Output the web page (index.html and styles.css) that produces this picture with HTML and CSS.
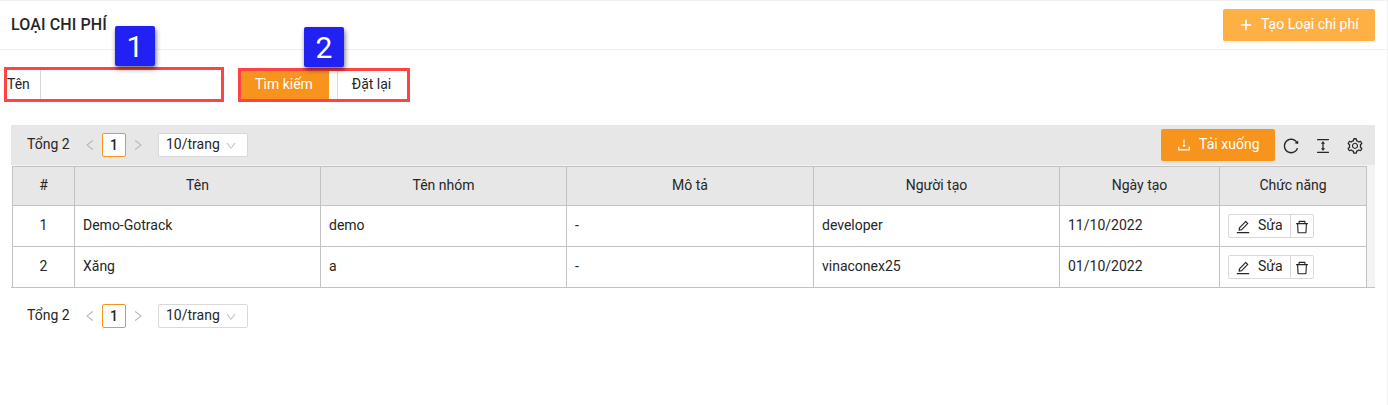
FILE: index.html
```html
<!DOCTYPE html>
<html lang="vi">
<head>
<meta charset="utf-8">
<title>Loại chi phí</title>
<link rel="stylesheet" href="styles.css">
</head>
<body>
<svg class="sprite" aria-hidden="true">
  <symbol id="plus" viewBox="0 0 1024 1024"><path d="M460 176h104v672h-104z"/><path d="M176 460h672v104H176z"/></symbol>
  <symbol id="left" viewBox="0 0 1024 1024"><path d="M724 218.3V141c0-6.7-7.7-10.4-12.9-6.3L260.3 486.8a31.86 31.86 0 000 50.3l450.8 352.1c5.3 4.1 12.9.4 12.9-6.3v-77.3c0-4.9-2.3-9.6-6.1-12.6l-360-281 360-281.1c3.8-3 6.1-7.7 6.1-12.6z"/></symbol>
  <symbol id="right" viewBox="0 0 1024 1024"><path d="M765.7 486.8L314.9 134.7A7.97 7.97 0 00302 141v77.3c0 4.9 2.3 9.6 6.1 12.6l360 281.1-360 281.1c-3.9 3-6.1 7.7-6.1 12.6V883c0 6.7 7.7 10.4 12.9 6.3l450.8-352.1a31.96 31.96 0 000-50.4z"/></symbol>
  <symbol id="down" viewBox="0 0 1024 1024"><path d="M884 256h-75c-5.1 0-9.9 2.5-12.9 6.6L512 654.2 227.9 262.6c-3-4.1-7.8-6.6-12.9-6.6h-75c-6.5 0-10.3 7.4-6.5 12.7l352.6 486.1c12.8 17.6 39 17.6 51.7 0l352.6-486.1c3.9-5.3.1-12.7-6.4-12.7z"/></symbol>
  <symbol id="reload" viewBox="0 0 1024 1024"><path d="M909.1 209.3l-56.4 44.1C775.8 155.1 656.2 92 521.9 92 290 92 102.3 279.5 102 511.5 101.7 743.7 289.8 932 521.9 932c181.3 0 335.8-115 394.6-276.1 1.5-4.2-.7-8.9-4.9-10.3l-56.7-19.5a8 8 0 00-10.1 4.8c-1.8 5-3.8 10-5.9 14.9-17.3 41-42.1 77.8-73.7 109.4A344.77 344.77 0 01655.9 829c-42.3 17.9-87.4 27-133.8 27-46.5 0-91.5-9.1-133.8-27A341.5 341.5 0 01279 755.2a342.16 342.16 0 01-73.7-109.4c-17.9-42.4-27-87.4-27-133.9s9.1-91.5 27-133.9c17.3-41 42.1-77.8 73.7-109.4 31.6-31.6 68.4-56.4 109.3-73.8 42.3-17.9 87.4-27 133.8-27 46.5 0 91.5 9.1 133.8 27a341.5 341.5 0 01109.3 73.8c9.9 9.9 19.2 20.4 27.8 31.4l-60.2 47a8 8 0 003 14.1l175.6 43c5 1.2 9.9-2.6 9.9-7.7l.8-180.9c-.1-6.6-7.8-10.3-13-6.2z"/></symbol>
  <symbol id="height" viewBox="0 0 1024 1024"><path d="M840 836H184c-4.4 0-8 3.6-8 8v60c0 4.4 3.6 8 8 8h656c4.4 0 8-3.6 8-8v-60c0-4.4-3.6-8-8-8zm0-724H184c-4.4 0-8 3.6-8 8v60c0 4.4 3.6 8 8 8h656c4.4 0 8-3.6 8-8v-60c0-4.4-3.6-8-8-8zM610.8 378c6 0 9.4-7 5.7-11.7L515.7 238.7a7.14 7.14 0 00-11.3 0L403.6 366.3a7.23 7.23 0 005.7 11.7H476v268h-62.8c-6 0-9.4 7-5.7 11.7l100.8 127.5c2.9 3.7 8.5 3.7 11.3 0l100.8-127.5c3.7-4.7.4-11.7-5.7-11.7H548V378h62.8z"/></symbol>
  <symbol id="setting" viewBox="0 0 1024 1024"><path d="M924.8 625.7l-65.5-56c3.1-19 4.7-38.4 4.7-57.8s-1.6-38.8-4.7-57.8l65.5-56a32.03 32.03 0 009.3-35.2l-.9-2.6a443.74 443.74 0 00-79.7-137.9l-1.8-2.1a32.12 32.12 0 00-35.1-9.5l-81.3 28.9c-30-24.6-63.5-44-99.7-57.6l-15.7-85a32.05 32.05 0 00-25.8-25.7l-2.7-.5c-52.1-9.4-106.9-9.4-159 0l-2.7.5a32.05 32.05 0 00-25.8 25.7l-15.8 85.4a351.86 351.86 0 00-99 57.4l-81.9-29.1a32 32 0 00-35.1 9.5l-1.8 2.1a446.02 446.02 0 00-79.7 137.9l-.9 2.6c-4.5 12.5-.8 26.5 9.3 35.2l66.3 56.6c-3.1 18.8-4.6 38-4.6 57.1 0 19.2 1.5 38.4 4.6 57.1L99 625.5a32.03 32.03 0 00-9.3 35.2l.9 2.6c18.1 50.4 44.9 96.9 79.7 137.9l1.8 2.1a32.12 32.12 0 0035.1 9.5l81.9-29.1c29.8 24.5 63.1 43.9 99 57.4l15.8 85.4a32.05 32.05 0 0025.8 25.7l2.7.5a449.4 449.4 0 00159 0l2.7-.5a32.05 32.05 0 0025.8-25.7l15.7-85a350 350 0 0099.7-57.6l81.3 28.9a32 32 0 0035.1-9.5l1.8-2.1c34.8-41.1 61.6-87.5 79.7-137.9l.9-2.6c4.5-12.3.8-26.3-9.3-35zM788.3 465.9c2.5 15.1 3.8 30.6 3.8 46.1s-1.3 31-3.8 46.1l-6.6 40.1 74.7 63.9a370.03 370.03 0 01-42.6 73.6L721 702.8l-31.4 25.8c-23.9 19.6-50.5 35-79.3 45.8l-38.1 14.3-17.9 97a377.5 377.5 0 01-85 0l-17.9-97.2-37.8-14.5c-28.5-10.8-55-26.2-78.7-45.7l-31.4-25.9-93.4 33.2c-17-22.9-31.2-47.6-42.6-73.6l75.5-64.5-6.5-40c-2.4-14.9-3.7-30.3-3.7-45.5 0-15.3 1.2-30.6 3.7-45.5l6.5-40-75.5-64.5c11.3-26.1 25.6-50.7 42.6-73.6l93.4 33.2 31.4-25.9c23.7-19.5 50.2-34.9 78.7-45.7l37.9-14.3 17.9-97.2c28.1-3.2 56.8-3.2 85 0l17.9 97 38.1 14.3c28.7 10.8 55.4 26.2 79.3 45.8l31.4 25.8 92.8-32.9c17 22.9 31.2 47.6 42.6 73.6L781.8 426l6.5 39.9zM512 326c-97.2 0-176 78.8-176 176s78.8 176 176 176 176-78.8 176-176-78.8-176-176-176zm79.2 255.2A111.6 111.6 0 01512 614c-29.9 0-58-11.7-79.2-32.8A111.6 111.6 0 01400 502c0-29.9 11.7-58 32.8-79.2C454 401.6 482.1 390 512 390c29.9 0 58 11.6 79.2 32.8A111.6 111.6 0 01624 502c0 29.9-11.7 58-32.8 79.2z"/></symbol>
  <symbol id="download" viewBox="0 0 1024 1024"><path d="M505.7 661a8 8 0 0012.6 0l112-141.7c4.1-5.2.4-12.9-6.3-12.9h-74.1V168c0-4.4-3.6-8-8-8h-60c-4.4 0-8 3.6-8 8v338.3H400c-6.7 0-10.4 7.7-6.3 12.9l112 141.8zM878 626h-60c-4.4 0-8 3.6-8 8v154H214V634c0-4.4-3.6-8-8-8h-60c-4.4 0-8 3.6-8 8v198c0 17.7 14.3 32 32 32h684c17.7 0 32-14.3 32-32V634c0-4.4-3.6-8-8-8z"/></symbol>
  <symbol id="edit" viewBox="0 0 1024 1024"><path d="M257.7 752c2 0 4-.2 6-.5L431.9 722c2-.4 3.9-1.3 5.3-2.8l423.9-423.9a9.96 9.96 0 000-14.1L694.9 114.9c-1.9-1.9-4.4-2.9-7.1-2.9s-5.2 1-7.1 2.9L256.8 538.8c-1.5 1.5-2.4 3.3-2.8 5.3l-29.5 168.2a33.5 33.5 0 009.4 29.8c6.6 6.4 14.9 9.9 23.8 9.9zm67.4-174.4L687.8 215l73.3 73.3-362.7 362.6-88.9 15.7 15.6-89zM880 836H144c-17.7 0-32 14.3-32 32v36c0 4.4 3.6 8 8 8h784c4.4 0 8-3.6 8-8v-36c0-17.7-14.3-32-32-32z"/></symbol>
  <symbol id="delete" viewBox="0 0 1024 1024"><path d="M360 184h-8c4.4 0 8-3.6 8-8v8h304v-8c0 4.4 3.6 8 8 8h-8v72h72v-80c0-35.3-28.7-64-64-64H352c-35.3 0-64 28.7-64 64v80h72v-72zm504 72H160c-17.7 0-32 14.3-32 32v32c0 4.4 3.6 8 8 8h60.4l24.7 523c1.6 34.1 29.8 61 63.9 61h454c34.2 0 62.3-26.8 63.9-61l24.7-523H888c4.4 0 8-3.6 8-8v-32c0-17.7-14.3-32-32-32zM731.3 840H292.7l-24.2-512h487l-24.2 512z"/></symbol>
</svg>
<main class="page">
  <header class="header">
    <h1 class="title">LOẠI CHI PHÍ</h1>
    <button class="btn btn-create"><svg class="icon"><use href="#plus"/></svg><span>Tạo Loại chi phí</span></button>
  </header>

  <form class="filters">
    <div class="callout callout-name">
      <label class="name-label" for="name">Tên</label>
      <input class="name-input" id="name" type="text">
      <span class="step step-one">1</span>
    </div>
    <div class="callout callout-actions">
      <button class="search" type="button">Tìm kiếm</button>
      <button class="reset" type="button">Đặt lại</button>
      <span class="step step-two">2</span>
    </div>
  </form>

  <section class="list">
    <div class="toolbar">
      <div class="pager">
        <span class="total">Tổng 2</span>
        <svg class="arrow"><use href="#left"/></svg>
        <span class="current">1</span>
        <svg class="arrow"><use href="#right"/></svg>
        <span class="size"><span>10/trang</span><svg class="caret"><use href="#down"/></svg></span>
      </div>
      <div class="tools">
        <button class="btn btn-download"><svg class="icon"><use href="#download"/></svg><span>Tải xuống</span></button>
        <svg class="tool"><use href="#reload"/></svg>
        <svg class="tool"><use href="#height"/></svg>
        <svg class="tool"><use href="#setting"/></svg>
      </div>
    </div>
    <div class="table-wrap">
      <table class="table">
        <colgroup><col class="c-index"><col class="c-name"><col class="c-group"><col class="c-desc"><col class="c-user"><col class="c-date"><col class="c-action"></colgroup>
        <thead>
          <tr><th>#</th><th>Tên</th><th>Tên nhóm</th><th>Mô tả</th><th>Người tạo</th><th>Ngày tạo</th><th>Chức năng</th></tr>
        </thead>
        <tbody>
          <tr><td class="num">1</td><td>Demo-Gotrack</td><td>demo</td><td>-</td><td>developer</td><td>11/10/2022</td>
            <td><div class="actions"><span class="edit"><svg class="icon"><use href="#edit"/></svg><span>Sửa</span></span><span class="delete"><svg class="icon"><use href="#delete"/></svg></span></div></td></tr>
          <tr><td class="num">2</td><td>Xăng</td><td>a</td><td>-</td><td>vinaconex25</td><td>01/10/2022</td>
            <td><div class="actions"><span class="edit"><svg class="icon"><use href="#edit"/></svg><span>Sửa</span></span><span class="delete"><svg class="icon"><use href="#delete"/></svg></span></div></td></tr>
        </tbody>
      </table>
    </div>
    <div class="pager pager-bottom">
      <span class="total">Tổng 2</span>
      <svg class="arrow"><use href="#left"/></svg>
      <span class="current">1</span>
      <svg class="arrow"><use href="#right"/></svg>
      <span class="size"><span>10/trang</span><svg class="caret"><use href="#down"/></svg></span>
    </div>
  </section>
</main>
</body>
</html>
```

FILE: styles.css
```css
* { box-sizing: border-box; }
body {
  margin: 0;
  background: #fff;
  color: #262626;
  font: 14px/22px Roboto, "Liberation Sans", sans-serif;
}
svg { display: block; fill: currentColor; flex: none; }
button, input { font: inherit; letter-spacing: inherit; color: inherit; margin: 0; border: 0; }
.sprite { position: absolute; width: 0; height: 0; }
.icon { width: 16px; height: 16px; }

.page {
  height: 405px;
  border-top: 1px solid #f0f0f0;
  border-right: 1px solid #f0f0f0;
}
.header {
  display: flex;
  justify-content: space-between;
  align-items: center;
  height: 49px;
  padding: 0 12px 0 11px;
  border-bottom: 1px solid #f0f0f0;
}
.title { margin: 0; font-size: 16px; font-weight: 500; letter-spacing: 0.12px; }
.btn {
  display: flex;
  align-items: center;
  height: 32px;
  padding: 0 0 0 15px;
  gap: 7px;
  border-radius: 2px;
  background: #f7941d;
  color: #fff;
  white-space: nowrap;
  box-shadow: 0 2px 0 rgba(0, 0, 0, 0.04);
}
.btn span { margin-top: -2px; }
.btn-create { width: 152px; background: #ffb044; }

.filters { display: flex; gap: 14px; height: 75px; padding: 17px 0 0 4px; }
.callout { position: relative; display: flex; border: 3px solid #ff4242; }
.callout-name { width: 220px; height: 35px; }
.callout-actions { width: 172px; height: 34px; margin-top: 1px; }
.name-label { width: 33px; line-height: 28px; }
.name-input { flex: 1; min-width: 0; border-left: 1px solid #d9d9d9; background: #fff; }
.search { width: 88px; padding: 0 2px 2px 0; background: #f7941d; color: #fff; }
.reset { flex: 1; margin-left: 8px; padding: 0 2px 2px 0; border-left: 1px solid #d9d9d9; background: #fff; }
.step {
  position: absolute;
  width: 40px;
  height: 40px;
  border-radius: 2px;
  background: #2121f3;
  color: #fff;
  font: 30px/41px Roboto, "Liberation Sans", sans-serif;
  text-align: center;
  box-shadow: 1px 3px 5px rgba(0, 0, 0, 0.55);
}
.step-one { left: 108px; top: -44px; }
.step-two { left: 63px; top: -44px; }

.list { padding: 0 12px 0 11px; }
.toolbar {
  display: flex;
  justify-content: space-between;
  align-items: center;
  height: 40px;
  padding: 0 11px 0 16px;
  background: #e7e7e7;
}
.pager { display: flex; align-items: center; height: 24px; }
.total { width: 56px; margin-top: -2px; }
.arrow { width: 14px; height: 14px; color: #b8b8b8; }
.current {
  width: 24px;
  height: 24px;
  margin: 0 5px;
  border: 1px solid #f7941d;
  border-radius: 2px;
  background: #fff;
  font-weight: 500;
  text-align: center;
}
.size {
  display: flex;
  align-items: center;
  justify-content: space-between;
  width: 90px;
  height: 24px;
  margin-left: 13px;
  padding: 0 10px 0 7px;
  border: 1px solid #d9d9d9;
  border-radius: 2px;
  background: #fff;
}
.size span { margin-top: -2px; }
.caret { width: 12px; height: 12px; color: #bfbfbf; margin-top: 2px; }
.tools { display: flex; align-items: center; gap: 14px; }
.btn-download { width: 114px; margin-right: -7px; letter-spacing: 0.05px; }
.tool { width: 18px; height: 18px; margin-top: 2px; }

.table-wrap {
  height: 123px;
  padding: 1px 0 0 1px;
  background: linear-gradient(#c2c2c2, #c2c2c2) 0 100% / 100% 1px no-repeat, linear-gradient(90deg, #fff 1px, #f4f4f4 1px);
}
.table {
  width: 1355px;
  table-layout: fixed;
  border-collapse: separate;
  border-spacing: 0;
  border-left: 1px solid #c2c2c2;
  border-top: 1px solid #c2c2c2;
  background: #fff;
}
.c-index { width: 62px; }
.c-name, .c-group, .c-user { width: 246px; }
.c-desc { width: 247px; }
.c-date { width: 160px; }
.c-action { width: 147px; }
th, td {
  padding: 0 8px;
  border-right: 1px solid #c2c2c2;
  border-bottom: 1px solid #c2c2c2;
  text-align: left;
  font-weight: 400;
}
th { height: 39px; padding-bottom: 2px; background: #e7e7e7; text-align: center; }
td { height: 41px; padding-bottom: 2px; }
.num { text-align: center; }
.actions {
  display: flex;
  width: 86px;
  height: 24px;
  margin-top: 2px;
  border: 1px solid #d9d9d9;
  border-radius: 2px;
}
.edit { display: flex; align-items: center; gap: 7px; width: 61px; padding-left: 6px; }
.edit .icon { margin-top: 1px; }
.edit span { margin-top: -3px; }
.delete { flex: 1; padding: 4px 0 0 3px; border-left: 1px solid #d9d9d9; }
.pager-bottom { margin: 16px 0 0 16px; }
```
